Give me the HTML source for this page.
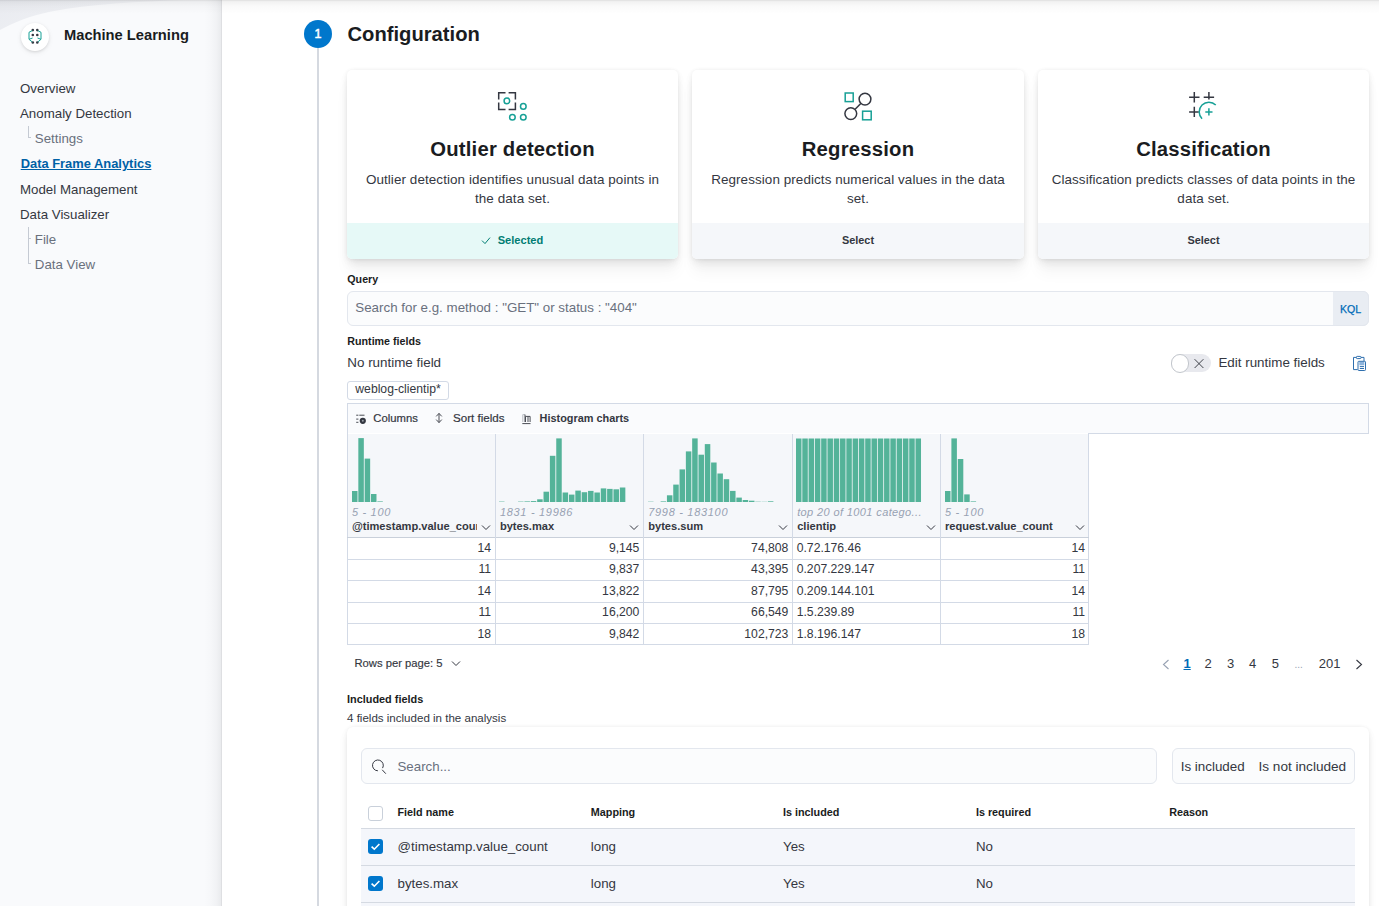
<!DOCTYPE html>
<html><head><meta charset="utf-8"><style>
html,body{margin:0;padding:0;}
body{width:1379px;height:906px;overflow:hidden;position:relative;background:#fff;font-family:"Liberation Sans", sans-serif;}
.t{position:absolute;white-space:nowrap;}
.b{position:absolute;display:block;}
</style></head><body>
<div class="b" style="left:0px;top:0px;width:222px;height:906px;background:#f9fafc;"></div>
<svg class="b" style="left:0px;top:0px;" width="221" height="40" viewBox="0 0 221 40"><defs><linearGradient id="wg" x1="0" y1="0" x2="1" y2="0.3"><stop offset="0" stop-color="#e9ebf0"/><stop offset="1" stop-color="#f3f4f7"/></linearGradient></defs><path d="M0 0H185C140 1.5 90 4 50 11.7C30 16 14 22 0 30Z" fill="url(#wg)"/></svg>
<div class="b" style="left:204px;top:0px;width:18px;height:906px;background:linear-gradient(to right,rgba(20,25,35,0) 0%,rgba(20,25,35,0.012) 35%,rgba(20,25,35,0.035) 70%,rgba(20,25,35,0.075) 100%);"></div>
<div class="b" style="left:221px;top:0px;width:1px;height:906px;background:rgba(20,25,35,0.05);"></div>
<div class="b" style="left:21px;top:23px;width:28px;height:28px;border-radius:50%;background:#fff;box-shadow:0 1px 3px rgba(0,0,0,0.12),0 2px 6px rgba(0,0,0,0.05);"></div>
<svg class="b" style="left:21px;top:23px;" width="28" height="28" viewBox="0 0 28 28"><g fill="#343741"><circle cx="11.8" cy="7.1" r="1.3"/><circle cx="16.3" cy="7.1" r="1.3"/><circle cx="11.8" cy="12" r="1.3"/><circle cx="16.3" cy="12" r="1.3"/><circle cx="11.8" cy="19.5" r="1.3"/><circle cx="16.3" cy="19.5" r="1.3"/></g><g fill="none" stroke="#17a096" stroke-width="1"><path d="M11.3 7.6 L8 9.3 V16.3 L11.3 19 M8 16.3 L11.6 15"/><path d="M16.8 7.6 L20 9.3 V16.3 L16.8 19 M20 16.3 L16.5 15"/></g></svg>
<div class="t" style="left:64.00px;top:28.16px;font-size:14.7px;line-height:14.7px;color:#1a1c21;font-weight:700;">Machine Learning</div>
<div class="t" style="left:20.00px;top:82.24px;font-size:13.3px;line-height:13.3px;color:#343741;">Overview</div>
<div class="t" style="left:20.00px;top:107.34px;font-size:13.3px;line-height:13.3px;color:#343741;">Anomaly Detection</div>
<div class="t" style="left:34.80px;top:132.04px;font-size:13.3px;line-height:13.3px;color:#69707d;">Settings</div>
<div class="t" style="left:20.70px;top:158.28px;font-size:12.9px;line-height:12.9px;color:#0061a6;font-weight:700;text-decoration:underline;text-underline-offset:1px;">Data Frame Analytics</div>
<div class="t" style="left:20.00px;top:183.44px;font-size:13.3px;line-height:13.3px;color:#343741;">Model Management</div>
<div class="t" style="left:20.00px;top:208.34px;font-size:13.3px;line-height:13.3px;color:#343741;">Data Visualizer</div>
<div class="t" style="left:34.80px;top:233.24px;font-size:13.3px;line-height:13.3px;color:#69707d;">File</div>
<div class="t" style="left:34.80px;top:258.14px;font-size:13.3px;line-height:13.3px;color:#69707d;">Data View</div>
<div class="b" style="left:28px;top:126px;width:1px;height:11px;background:#c5cad3;"></div>
<div class="b" style="left:28px;top:137px;width:3px;height:1px;background:#c5cad3;"></div>
<div class="b" style="left:28px;top:227px;width:1px;height:37px;background:#c5cad3;"></div>
<div class="b" style="left:28px;top:238px;width:3px;height:1px;background:#c5cad3;"></div>
<div class="b" style="left:28px;top:263px;width:3px;height:1px;background:#c5cad3;"></div>
<div class="b" style="left:0px;top:0px;width:1379px;height:14px;background:linear-gradient(to bottom,rgba(0,0,0,0.13),rgba(0,0,0,0.05) 12%,rgba(0,0,0,0.02) 45%,rgba(0,0,0,0));"></div>
<div class="b" style="left:317px;top:48px;width:2px;height:858px;background:#d5d9e0;"></div>
<div class="b" style="left:304px;top:20px;width:28px;height:28px;border-radius:50%;background:#0077cc;"></div>
<div class="t" style="left:304.00px;top:28.32px;font-size:12.5px;line-height:12.5px;color:#fff;text-align:center;width:28px;-webkit-text-stroke:0.5px #fff;">1</div>
<div class="t" style="left:347.50px;top:24.10px;font-size:20.2px;line-height:20.2px;color:#1a1c21;font-weight:700;">Configuration</div>
<div class="b" style="left:347px;top:70px;width:331px;height:189px;background:#fff;border-radius:5px;box-shadow:0 0.9px 4px -1px rgba(0,0,0,0.08),0 2.6px 8px -1px rgba(0,0,0,0.06),0 5.7px 12px -1px rgba(0,0,0,0.05),0 15px 15px -1px rgba(0,0,0,0.04);"></div>
<div class="b" style="left:347px;top:223px;width:331px;height:36px;border-radius:0 0 5px 5px;background:#e6f9f7;"></div>
<div class="t" style="left:347.00px;top:139.02px;font-size:20.3px;line-height:20.3px;color:#1a1c21;font-weight:700;letter-spacing:0.2px;text-align:center;width:331px;">Outlier detection</div>
<div class="t" style="left:347.00px;top:172.91px;font-size:13.45px;line-height:13.45px;color:#343741;letter-spacing:0.08px;text-align:center;width:331px;">Outlier detection identifies unusual data points in</div>
<div class="t" style="left:347.00px;top:191.71px;font-size:13.45px;line-height:13.45px;color:#343741;letter-spacing:0.08px;text-align:center;width:331px;">the data set.</div>
<div class="t" style="left:355.00px;top:234.50px;font-size:11.1px;line-height:11.1px;color:#017d73;font-weight:700;text-align:center;width:331px;">Selected</div>
<svg class="b" style="left:481px;top:236px;" width="10" height="9" viewBox="0 0 10 9"><path d="M1 4.6 L4 7.6 L9 1.6" fill="none" stroke="#017d73" stroke-width="1"/></svg>
<div class="b" style="left:692px;top:70px;width:332px;height:189px;background:#fff;border-radius:5px;box-shadow:0 0.9px 4px -1px rgba(0,0,0,0.08),0 2.6px 8px -1px rgba(0,0,0,0.06),0 5.7px 12px -1px rgba(0,0,0,0.05),0 15px 15px -1px rgba(0,0,0,0.04);"></div>
<div class="b" style="left:692px;top:223px;width:332px;height:36px;border-radius:0 0 5px 5px;background:#f5f7fa;"></div>
<div class="t" style="left:692.00px;top:139.02px;font-size:20.3px;line-height:20.3px;color:#1a1c21;font-weight:700;letter-spacing:0.2px;text-align:center;width:332px;">Regression</div>
<div class="t" style="left:692.00px;top:172.91px;font-size:13.45px;line-height:13.45px;color:#343741;letter-spacing:0.08px;text-align:center;width:332px;">Regression predicts numerical values in the data</div>
<div class="t" style="left:692.00px;top:191.71px;font-size:13.45px;line-height:13.45px;color:#343741;letter-spacing:0.08px;text-align:center;width:332px;">set.</div>
<div class="t" style="left:692.00px;top:234.67px;font-size:10.9px;line-height:10.9px;color:#343741;font-weight:700;text-align:center;width:332px;">Select</div>
<div class="b" style="left:1038px;top:70px;width:331px;height:189px;background:#fff;border-radius:5px;box-shadow:0 0.9px 4px -1px rgba(0,0,0,0.08),0 2.6px 8px -1px rgba(0,0,0,0.06),0 5.7px 12px -1px rgba(0,0,0,0.05),0 15px 15px -1px rgba(0,0,0,0.04);"></div>
<div class="b" style="left:1038px;top:223px;width:331px;height:36px;border-radius:0 0 5px 5px;background:#f5f7fa;"></div>
<div class="t" style="left:1038.00px;top:139.02px;font-size:20.3px;line-height:20.3px;color:#1a1c21;font-weight:700;letter-spacing:0.2px;text-align:center;width:331px;">Classification</div>
<div class="t" style="left:1038.00px;top:172.91px;font-size:13.45px;line-height:13.45px;color:#343741;letter-spacing:0.08px;text-align:center;width:331px;">Classification predicts classes of data points in the</div>
<div class="t" style="left:1038.00px;top:191.71px;font-size:13.45px;line-height:13.45px;color:#343741;letter-spacing:0.08px;text-align:center;width:331px;">data set.</div>
<div class="t" style="left:1038.00px;top:234.67px;font-size:10.9px;line-height:10.9px;color:#343741;font-weight:700;text-align:center;width:331px;">Select</div>
<svg class="b" style="left:496px;top:90px;" width="32" height="32" viewBox="0 0 32 32"><g fill="none" stroke="#343741" stroke-width="1.5"><path d="M2.7 9.5V2.7H9.5M12.6 2.7H19.4V9.5M2.7 12.6V19.4H9.5M12.6 19.4H19.4V12.6"/></g><g fill="none" stroke="#17a096" stroke-width="1.5"><circle cx="10.9" cy="10.9" r="2.8"/><circle cx="27.3" cy="16.4" r="2.8"/><circle cx="16.4" cy="27.3" r="2.8"/><circle cx="27.3" cy="27.3" r="2.8"/></g></svg>
<svg class="b" style="left:842px;top:90px;" width="32" height="32" viewBox="0 0 32 32"><g fill="none" stroke="#17a096" stroke-width="1.5"><rect x="3.2" y="3" width="8" height="8.6"/><rect x="20.6" y="21.2" width="8.6" height="8.6"/></g><g fill="none" stroke="#343741" stroke-width="1.5"><circle cx="23" cy="9.1" r="5.9"/><circle cx="8.8" cy="23.6" r="5.9"/><path d="M13.1 19.3L18.8 13.4"/></g></svg>
<svg class="b" style="left:1188px;top:90px;" width="32" height="32" viewBox="0 0 32 32"><g fill="none" stroke="#343741" stroke-width="1.5"><path d="M1.1 7.2H11.5M6.3 2V12.4M1.1 21.9H10.8M6.3 16.7V27.1M15.7 7.2H26.1M20.9 2V9.6"/></g><g fill="none" stroke="#17a096" stroke-width="1.5"><path d="M14.04 28.76A9.7 9.7 0 0 1 27.76 15.04"/><path d="M17.3 21.9H24.5M20.9 18.3V25.5"/></g></svg>
<div class="t" style="left:347.30px;top:273.94px;font-size:10.7px;line-height:10.7px;color:#1a1c21;font-weight:700;">Query</div>
<div class="b" style="left:347px;top:291px;width:1022px;height:35px;box-sizing:border-box;border:1px solid #e3e7ee;border-radius:6px;background:#fbfcfd;"></div>
<div class="b" style="left:1333px;top:291px;width:36px;height:35px;box-sizing:border-box;border:1px solid #e3e7ee;border-left:none;border-radius:0 6px 6px 0;background:#e9edf3;"></div>
<div class="t" style="left:355.30px;top:301.20px;font-size:13.35px;line-height:13.35px;color:#69707d;">Search for e.g. method : "GET" or status : "404"</div>
<div class="t" style="left:1340.00px;top:304.33px;font-size:10.6px;line-height:10.6px;color:#006bb8;-webkit-text-stroke:0.25px #006bb8;">KQL</div>
<div class="t" style="left:347.30px;top:335.74px;font-size:10.7px;line-height:10.7px;color:#1a1c21;font-weight:700;">Runtime fields</div>
<div class="t" style="left:347.30px;top:355.76px;font-size:13.4px;line-height:13.4px;color:#343741;">No runtime field</div>
<div class="b" style="left:1171px;top:354.3px;width:40px;height:17.5px;border-radius:9px;background:#e8e9ee;"></div>
<div class="b" style="left:1170.8px;top:354.2px;width:18.6px;height:18.6px;box-sizing:border-box;border-radius:50%;background:#fff;border:1px solid #c2c6cc;"></div>
<svg class="b" style="left:1193px;top:357px;" width="12" height="12" viewBox="0 0 12 12"><path d="M1.6 2.2L10.4 11M10.4 2.2L1.6 11" stroke="#3f424a" stroke-width="1"/></svg>
<div class="t" style="left:1218.40px;top:356.06px;font-size:13.4px;line-height:13.4px;color:#343741;">Edit runtime fields</div>
<svg class="b" style="left:1350px;top:354px;" width="18" height="18" viewBox="0 0 18 18"><rect x="9.3" y="7.8" width="5" height="3.5" fill="#8db4dc"/><g fill="none" stroke="#2f6fae" stroke-width="1"><path d="M7.6 15.6H3.5V3.4H6.3M11 3.4H14V7.2"/><rect x="6.4" y="2.4" width="4.6" height="2.2" rx="0.8"/><rect x="8" y="7.3" width="7.5" height="9.2" rx="0.8"/><path d="M9.8 12.6H14M9.8 14.5H14"/></g></svg>
<div class="b" style="left:347px;top:381px;width:102px;height:19px;box-sizing:border-box;border:1px solid #d3dae6;border-radius:3px;background:#fff;"></div>
<div class="t" style="left:355.30px;top:383.07px;font-size:12.2px;line-height:12.2px;color:#343741;">weblog-clientip*</div>
<div class="b" style="left:347px;top:403px;width:1022px;height:31px;box-sizing:border-box;border:1px solid #d3dae6;background:#fafbfd;"></div>
<svg class="b" style="left:355px;top:411px;" width="13" height="14" viewBox="0 0 13 14"><g fill="#4a4d55"><rect x="1.2" y="3.7" width="2.2" height="1"/><rect x="4.3" y="3.7" width="5.2" height="1"/><rect x="1.2" y="7.6" width="2.2" height="1"/><rect x="1.2" y="10.8" width="2.2" height="1"/></g><circle cx="7.8" cy="9.8" r="3.1" fill="#343741"/><circle cx="7.8" cy="9.8" r="1" fill="#9aa0a8"/></svg>
<div class="t" style="left:373.30px;top:412.63px;font-size:11.3px;line-height:11.3px;color:#343741;-webkit-text-stroke:0.2px #343741;">Columns</div>
<svg class="b" style="left:434px;top:412px;" width="10" height="12" viewBox="0 0 10 12"><path d="M2.2 4.4L5 1.4L7.8 4.4M2.2 7.6L5 10.6L7.8 7.6M5 1.4V10.6" fill="none" stroke="#4a4d55" stroke-width="1"/></svg>
<div class="t" style="left:453.00px;top:412.38px;font-size:11.6px;line-height:11.6px;color:#343741;-webkit-text-stroke:0.2px #343741;">Sort fields</div>
<svg class="b" style="left:520px;top:411px;" width="13" height="14" viewBox="0 0 13 14"><path d="M2.8 11V3.6H5" fill="none" stroke="#b9bdc4" stroke-width="1"/><g fill="none" stroke="#4a4d55" stroke-width="1"><path d="M2.3 12.6H10.5M5 11V3.6M5.5 11V5.4H8V11M8 5.4H10.1V11"/></g></svg>
<div class="t" style="left:539.60px;top:412.97px;font-size:10.9px;line-height:10.9px;color:#343741;font-weight:700;">Histogram charts</div>
<div class="b" style="left:347px;top:433px;width:742px;height:212px;box-sizing:border-box;border:1px solid #d3dae6;border-top:none;background:#fff;"></div>
<div class="b" style="left:348px;top:434px;width:740px;height:103px;background:#f5f7fa;"></div>
<div class="b" style="left:347px;top:536.5px;width:742px;height:1px;background:#c9d0da;"></div>
<div class="b" style="left:495px;top:434px;width:1px;height:211px;background:#d3dae6;"></div>
<div class="b" style="left:643.3px;top:434px;width:1px;height:211px;background:#d3dae6;"></div>
<div class="b" style="left:792.3px;top:434px;width:1px;height:211px;background:#d3dae6;"></div>
<div class="b" style="left:940px;top:434px;width:1px;height:211px;background:#d3dae6;"></div>
<div class="b" style="left:347px;top:558.6px;width:742px;height:1px;background:#d3dae6;"></div>
<div class="b" style="left:347px;top:580.2px;width:742px;height:1px;background:#d3dae6;"></div>
<div class="b" style="left:347px;top:601.8px;width:742px;height:1px;background:#d3dae6;"></div>
<div class="b" style="left:347px;top:623.4px;width:742px;height:1px;background:#d3dae6;"></div>
<svg class="b" style="left:351.9px;top:431.8px;" width="130" height="70" viewBox="0 0 130 70"><g fill="#54b399"><rect x="0.00" y="59.00" width="5.5" height="11.00"/><rect x="6.33" y="6.10" width="5.5" height="63.90"/><rect x="12.66" y="26.60" width="5.5" height="43.40"/><rect x="18.99" y="62.00" width="5.5" height="8.00"/><rect x="25.32" y="69.40" width="5.5" height="0.60"/></g></svg>
<svg class="b" style="left:498.5px;top:431.8px;" width="130" height="70" viewBox="0 0 130 70"><g fill="#54b399"><rect x="0.00" y="69.60" width="5.5" height="0.40"/><rect x="19.08" y="69.60" width="5.5" height="0.40"/><rect x="25.44" y="69.40" width="5.5" height="0.60"/><rect x="31.80" y="69.10" width="5.5" height="0.90"/><rect x="38.16" y="67.30" width="5.5" height="2.70"/><rect x="44.52" y="59.70" width="5.5" height="10.30"/><rect x="50.88" y="23.80" width="5.5" height="46.20"/><rect x="57.24" y="6.40" width="5.5" height="63.60"/><rect x="63.60" y="60.50" width="5.5" height="9.50"/><rect x="69.96" y="62.60" width="5.5" height="7.40"/><rect x="76.32" y="58.60" width="5.5" height="11.40"/><rect x="82.68" y="60.20" width="5.5" height="9.80"/><rect x="89.04" y="58.90" width="5.5" height="11.10"/><rect x="95.40" y="60.50" width="5.5" height="9.50"/><rect x="101.76" y="56.40" width="5.5" height="13.60"/><rect x="108.12" y="56.90" width="5.5" height="13.10"/><rect x="114.48" y="57.30" width="5.5" height="12.70"/><rect x="120.84" y="55.50" width="5.5" height="14.50"/></g></svg>
<svg class="b" style="left:648px;top:431.8px;" width="130" height="70" viewBox="0 0 130 70"><g fill="#54b399"><rect x="0.00" y="69.70" width="5.5" height="0.30"/><rect x="12.62" y="69.40" width="5.5" height="0.60"/><rect x="18.93" y="63.30" width="5.5" height="6.70"/><rect x="25.24" y="52.60" width="5.5" height="17.40"/><rect x="31.55" y="37.40" width="5.5" height="32.60"/><rect x="37.86" y="19.40" width="5.5" height="50.60"/><rect x="44.17" y="6.40" width="5.5" height="63.60"/><rect x="50.48" y="22.70" width="5.5" height="47.30"/><rect x="56.79" y="12.10" width="5.5" height="57.90"/><rect x="63.10" y="30.50" width="5.5" height="39.50"/><rect x="69.41" y="41.50" width="5.5" height="28.50"/><rect x="75.72" y="47.20" width="5.5" height="22.80"/><rect x="82.03" y="58.90" width="5.5" height="11.10"/><rect x="88.34" y="65.60" width="5.5" height="4.40"/><rect x="94.65" y="68.00" width="5.5" height="2.00"/><rect x="100.96" y="68.70" width="5.5" height="1.30"/><rect x="107.27" y="69.70" width="5.5" height="0.30"/><rect x="113.58" y="69.80" width="5.5" height="0.20"/><rect x="119.89" y="69.30" width="5.5" height="0.70"/></g></svg>
<svg class="b" style="left:796.1px;top:431.8px;" width="130" height="70" viewBox="0 0 130 70"><g fill="#54b399"><rect x="0.00" y="6.50" width="5.5" height="63.50"/><rect x="6.29" y="6.50" width="5.5" height="63.50"/><rect x="12.58" y="6.50" width="5.5" height="63.50"/><rect x="18.87" y="6.50" width="5.5" height="63.50"/><rect x="25.16" y="6.50" width="5.5" height="63.50"/><rect x="31.45" y="6.50" width="5.5" height="63.50"/><rect x="37.74" y="6.50" width="5.5" height="63.50"/><rect x="44.03" y="6.50" width="5.5" height="63.50"/><rect x="50.32" y="6.50" width="5.5" height="63.50"/><rect x="56.61" y="6.50" width="5.5" height="63.50"/><rect x="62.90" y="6.50" width="5.5" height="63.50"/><rect x="69.19" y="6.50" width="5.5" height="63.50"/><rect x="75.48" y="6.50" width="5.5" height="63.50"/><rect x="81.77" y="6.50" width="5.5" height="63.50"/><rect x="88.06" y="6.50" width="5.5" height="63.50"/><rect x="94.35" y="6.50" width="5.5" height="63.50"/><rect x="100.64" y="6.50" width="5.5" height="63.50"/><rect x="106.93" y="6.50" width="5.5" height="63.50"/><rect x="113.22" y="6.50" width="5.5" height="63.50"/><rect x="119.51" y="6.50" width="5.5" height="63.50"/></g></svg>
<svg class="b" style="left:945px;top:431.8px;" width="130" height="70" viewBox="0 0 130 70"><g fill="#54b399"><rect x="0.00" y="59.00" width="5.5" height="11.00"/><rect x="6.40" y="6.40" width="5.5" height="63.60"/><rect x="12.80" y="27.00" width="5.5" height="43.00"/><rect x="19.20" y="62.40" width="5.5" height="7.60"/><rect x="25.60" y="69.40" width="5.5" height="0.60"/></g></svg>
<div class="t" style="left:351.90px;top:507.19px;font-size:11px;line-height:11px;color:#98a2b3;font-style:italic;letter-spacing:0.7px;">5 - 100</div>
<div class="t" style="left:351.90px;top:520.70px;font-size:11.1px;line-height:11.1px;color:#343741;font-weight:700;width:125px;overflow:hidden;">@timestamp.value_count</div>
<svg class="b" style="left:481px;top:524px;" width="10" height="7" viewBox="0 0 10 7"><path d="M1 1.5L5 5.5L9 1.5" fill="none" stroke="#343741" stroke-width="1"/></svg>
<div class="t" style="left:499.90px;top:507.19px;font-size:11px;line-height:11px;color:#98a2b3;font-style:italic;letter-spacing:0.7px;">1831 - 19986</div>
<div class="t" style="left:499.90px;top:520.70px;font-size:11.1px;line-height:11.1px;color:#343741;font-weight:700;width:125px;overflow:hidden;">bytes.max</div>
<svg class="b" style="left:629.3px;top:524px;" width="10" height="7" viewBox="0 0 10 7"><path d="M1 1.5L5 5.5L9 1.5" fill="none" stroke="#343741" stroke-width="1"/></svg>
<div class="t" style="left:648.20px;top:507.19px;font-size:11px;line-height:11px;color:#98a2b3;font-style:italic;letter-spacing:0.7px;">7998 - 183100</div>
<div class="t" style="left:648.20px;top:520.70px;font-size:11.1px;line-height:11.1px;color:#343741;font-weight:700;width:125px;overflow:hidden;">bytes.sum</div>
<svg class="b" style="left:778.3px;top:524px;" width="10" height="7" viewBox="0 0 10 7"><path d="M1 1.5L5 5.5L9 1.5" fill="none" stroke="#343741" stroke-width="1"/></svg>
<div class="t" style="left:797.20px;top:507.19px;font-size:11px;line-height:11px;color:#98a2b3;font-style:italic;letter-spacing:0.38px;">top 20 of 1001 catego...</div>
<div class="t" style="left:797.20px;top:520.70px;font-size:11.1px;line-height:11.1px;color:#343741;font-weight:700;width:125px;overflow:hidden;">clientip</div>
<svg class="b" style="left:926px;top:524px;" width="10" height="7" viewBox="0 0 10 7"><path d="M1 1.5L5 5.5L9 1.5" fill="none" stroke="#343741" stroke-width="1"/></svg>
<div class="t" style="left:944.90px;top:507.19px;font-size:11px;line-height:11px;color:#98a2b3;font-style:italic;letter-spacing:0.7px;">5 - 100</div>
<div class="t" style="left:944.90px;top:520.70px;font-size:11.1px;line-height:11.1px;color:#343741;font-weight:700;width:125px;overflow:hidden;">request.value_count</div>
<svg class="b" style="left:1075px;top:524px;" width="10" height="7" viewBox="0 0 10 7"><path d="M1 1.5L5 5.5L9 1.5" fill="none" stroke="#343741" stroke-width="1"/></svg>
<div class="t" style="left:347.00px;top:541.57px;font-size:12.2px;line-height:12.2px;color:#343741;text-align:right;width:144.1px;">14</div>
<div class="t" style="left:495.00px;top:541.57px;font-size:12.2px;line-height:12.2px;color:#343741;text-align:right;width:144.39999999999995px;">9,145</div>
<div class="t" style="left:643.30px;top:541.57px;font-size:12.2px;line-height:12.2px;color:#343741;text-align:right;width:145.1px;">74,808</div>
<div class="t" style="left:796.70px;top:541.57px;font-size:12.2px;line-height:12.2px;color:#343741;">0.72.176.46</div>
<div class="t" style="left:940.00px;top:541.57px;font-size:12.2px;line-height:12.2px;color:#343741;text-align:right;width:145.1px;">14</div>
<div class="t" style="left:347.00px;top:563.17px;font-size:12.2px;line-height:12.2px;color:#343741;text-align:right;width:144.1px;">11</div>
<div class="t" style="left:495.00px;top:563.17px;font-size:12.2px;line-height:12.2px;color:#343741;text-align:right;width:144.39999999999995px;">9,837</div>
<div class="t" style="left:643.30px;top:563.17px;font-size:12.2px;line-height:12.2px;color:#343741;text-align:right;width:145.1px;">43,395</div>
<div class="t" style="left:796.70px;top:563.17px;font-size:12.2px;line-height:12.2px;color:#343741;">0.207.229.147</div>
<div class="t" style="left:940.00px;top:563.17px;font-size:12.2px;line-height:12.2px;color:#343741;text-align:right;width:145.1px;">11</div>
<div class="t" style="left:347.00px;top:584.77px;font-size:12.2px;line-height:12.2px;color:#343741;text-align:right;width:144.1px;">14</div>
<div class="t" style="left:495.00px;top:584.77px;font-size:12.2px;line-height:12.2px;color:#343741;text-align:right;width:144.39999999999995px;">13,822</div>
<div class="t" style="left:643.30px;top:584.77px;font-size:12.2px;line-height:12.2px;color:#343741;text-align:right;width:145.1px;">87,795</div>
<div class="t" style="left:796.70px;top:584.77px;font-size:12.2px;line-height:12.2px;color:#343741;">0.209.144.101</div>
<div class="t" style="left:940.00px;top:584.77px;font-size:12.2px;line-height:12.2px;color:#343741;text-align:right;width:145.1px;">14</div>
<div class="t" style="left:347.00px;top:606.37px;font-size:12.2px;line-height:12.2px;color:#343741;text-align:right;width:144.1px;">11</div>
<div class="t" style="left:495.00px;top:606.37px;font-size:12.2px;line-height:12.2px;color:#343741;text-align:right;width:144.39999999999995px;">16,200</div>
<div class="t" style="left:643.30px;top:606.37px;font-size:12.2px;line-height:12.2px;color:#343741;text-align:right;width:145.1px;">66,549</div>
<div class="t" style="left:796.70px;top:606.37px;font-size:12.2px;line-height:12.2px;color:#343741;">1.5.239.89</div>
<div class="t" style="left:940.00px;top:606.37px;font-size:12.2px;line-height:12.2px;color:#343741;text-align:right;width:145.1px;">11</div>
<div class="t" style="left:347.00px;top:627.97px;font-size:12.2px;line-height:12.2px;color:#343741;text-align:right;width:144.1px;">18</div>
<div class="t" style="left:495.00px;top:627.97px;font-size:12.2px;line-height:12.2px;color:#343741;text-align:right;width:144.39999999999995px;">9,842</div>
<div class="t" style="left:643.30px;top:627.97px;font-size:12.2px;line-height:12.2px;color:#343741;text-align:right;width:145.1px;">102,723</div>
<div class="t" style="left:796.70px;top:627.97px;font-size:12.2px;line-height:12.2px;color:#343741;">1.8.196.147</div>
<div class="t" style="left:940.00px;top:627.97px;font-size:12.2px;line-height:12.2px;color:#343741;text-align:right;width:145.1px;">18</div>
<div class="t" style="left:354.40px;top:657.78px;font-size:11.25px;line-height:11.25px;color:#343741;-webkit-text-stroke:0.15px #343741;">Rows per page: 5</div>
<svg class="b" style="left:451px;top:660px;" width="10" height="7" viewBox="0 0 10 7"><path d="M1 1.5L5 5.5L9 1.5" fill="none" stroke="#343741" stroke-width="1"/></svg>
<svg class="b" style="left:1162px;top:659px;" width="8" height="11" viewBox="0 0 8 11"><path d="M6.5 1L1.5 5.5L6.5 10" fill="none" stroke="#98a2b3" stroke-width="1.1"/></svg>
<div class="t" style="left:1183.50px;top:657.30px;font-size:13px;line-height:13px;color:#006bb8;font-weight:700;text-decoration:underline;text-underline-offset:1px;">1</div>
<div class="t" style="left:1204.50px;top:657.30px;font-size:13px;line-height:13px;color:#343741;font-weight:400;">2</div>
<div class="t" style="left:1227.00px;top:657.30px;font-size:13px;line-height:13px;color:#343741;font-weight:400;">3</div>
<div class="t" style="left:1249.00px;top:657.30px;font-size:13px;line-height:13px;color:#343741;font-weight:400;">4</div>
<div class="t" style="left:1271.80px;top:657.30px;font-size:13px;line-height:13px;color:#343741;font-weight:400;">5</div>
<div class="t" style="left:1318.80px;top:657.30px;font-size:13px;line-height:13px;color:#343741;font-weight:400;">201</div>
<div class="t" style="left:1294.50px;top:659.83px;font-size:10px;line-height:10px;color:#98a2b3;">...</div>
<svg class="b" style="left:1354.5px;top:659px;" width="8" height="11" viewBox="0 0 8 11"><path d="M1.5 1L6.5 5.5L1.5 10" fill="none" stroke="#343741" stroke-width="1.1"/></svg>
<div class="t" style="left:347.00px;top:694.17px;font-size:10.9px;line-height:10.9px;color:#1a1c21;font-weight:700;">Included fields</div>
<div class="t" style="left:347.00px;top:712.52px;font-size:11.55px;line-height:11.55px;color:#343741;">4 fields included in the analysis</div>
<div class="b" style="left:347px;top:727px;width:1022px;height:200px;background:#fff;border-radius:6px;box-shadow:0 0.9px 4px -1px rgba(0,0,0,0.08),0 2.6px 8px -1px rgba(0,0,0,0.06),0 5.7px 12px -1px rgba(0,0,0,0.05);"></div>
<div class="b" style="left:361px;top:748px;width:796px;height:35.5px;box-sizing:border-box;border:1px solid #e3e7ee;border-radius:6px;background:#fbfcfd;"></div>
<svg class="b" style="left:370px;top:759px;" width="17" height="16" viewBox="0 0 17 16"><g fill="none" stroke="#343741" stroke-width="1"><path d="M12.58 9.1A5.4 5.4 0 1 0 7.9 11.8"/><path d="M12.2 10.8L15.8 14.7"/></g></svg>
<div class="t" style="left:397.50px;top:759.64px;font-size:13.3px;line-height:13.3px;color:#69707d;">Search...</div>
<div class="b" style="left:1172px;top:748px;width:182.5px;height:35.5px;box-sizing:border-box;border:1px solid #e3e7ee;border-radius:6px;background:#fbfcfd;"></div>
<div class="t" style="left:1180.70px;top:759.96px;font-size:13.4px;line-height:13.4px;color:#343741;">Is included</div>
<div class="t" style="left:1258.50px;top:759.79px;font-size:13.6px;line-height:13.6px;color:#343741;">Is not included</div>
<div class="b" style="left:368px;top:806px;width:15px;height:15px;box-sizing:border-box;border:1px solid #c9d0da;border-radius:3px;background:#fff;"></div>
<div class="t" style="left:397.50px;top:806.96px;font-size:10.8px;line-height:10.8px;color:#1a1c21;font-weight:700;">Field name</div>
<div class="t" style="left:590.80px;top:806.96px;font-size:10.8px;line-height:10.8px;color:#1a1c21;font-weight:700;">Mapping</div>
<div class="t" style="left:783.00px;top:806.96px;font-size:10.8px;line-height:10.8px;color:#1a1c21;font-weight:700;">Is included</div>
<div class="t" style="left:975.90px;top:806.96px;font-size:10.8px;line-height:10.8px;color:#1a1c21;font-weight:700;">Is required</div>
<div class="t" style="left:1169.20px;top:806.96px;font-size:10.8px;line-height:10.8px;color:#1a1c21;font-weight:700;">Reason</div>
<div class="b" style="left:361px;top:828px;width:994px;height:1px;background:#d5dae2;"></div>
<div class="b" style="left:361px;top:829px;width:994px;height:36px;background:#f4f6fb;"></div>
<div class="b" style="left:361px;top:865px;width:994px;height:1px;background:#d5dae2;"></div>
<div class="b" style="left:368px;top:839px;width:15px;height:15px;border-radius:3px;background:#0077cc;"></div>
<svg class="b" style="left:368px;top:839px;" width="15" height="15" viewBox="0 0 15 15"><path d="M3.6 7.6L6.3 10.2L11.4 5" fill="none" stroke="#fff" stroke-width="1.6"/></svg>
<div class="t" style="left:397.50px;top:840.14px;font-size:13.3px;line-height:13.3px;color:#343741;">@timestamp.value_count</div>
<div class="t" style="left:590.80px;top:840.14px;font-size:13.3px;line-height:13.3px;color:#343741;">long</div>
<div class="t" style="left:783.00px;top:840.14px;font-size:13.3px;line-height:13.3px;color:#343741;">Yes</div>
<div class="t" style="left:975.90px;top:840.14px;font-size:13.3px;line-height:13.3px;color:#343741;">No</div>
<div class="b" style="left:361px;top:866px;width:994px;height:36px;background:#f4f6fb;"></div>
<div class="b" style="left:361px;top:902px;width:994px;height:1px;background:#d5dae2;"></div>
<div class="b" style="left:368px;top:876px;width:15px;height:15px;border-radius:3px;background:#0077cc;"></div>
<svg class="b" style="left:368px;top:876px;" width="15" height="15" viewBox="0 0 15 15"><path d="M3.6 7.6L6.3 10.2L11.4 5" fill="none" stroke="#fff" stroke-width="1.6"/></svg>
<div class="t" style="left:397.50px;top:877.14px;font-size:13.3px;line-height:13.3px;color:#343741;">bytes.max</div>
<div class="t" style="left:590.80px;top:877.14px;font-size:13.3px;line-height:13.3px;color:#343741;">long</div>
<div class="t" style="left:783.00px;top:877.14px;font-size:13.3px;line-height:13.3px;color:#343741;">Yes</div>
<div class="t" style="left:975.90px;top:877.14px;font-size:13.3px;line-height:13.3px;color:#343741;">No</div>
<div class="b" style="left:361px;top:903px;width:994px;height:36px;background:#f4f6fb;"></div>
<div class="b" style="left:361px;top:939px;width:994px;height:1px;background:#d5dae2;"></div>
<div class="b" style="left:368px;top:913px;width:15px;height:15px;border-radius:3px;background:#0077cc;"></div>
<svg class="b" style="left:368px;top:913px;" width="15" height="15" viewBox="0 0 15 15"><path d="M3.6 7.6L6.3 10.2L11.4 5" fill="none" stroke="#fff" stroke-width="1.6"/></svg>
<div class="t" style="left:397.50px;top:914.14px;font-size:13.3px;line-height:13.3px;color:#343741;">bytes.sum</div>
<div class="t" style="left:590.80px;top:914.14px;font-size:13.3px;line-height:13.3px;color:#343741;">long</div>
<div class="t" style="left:783.00px;top:914.14px;font-size:13.3px;line-height:13.3px;color:#343741;">Yes</div>
<div class="t" style="left:975.90px;top:914.14px;font-size:13.3px;line-height:13.3px;color:#343741;">No</div>
</body></html>
